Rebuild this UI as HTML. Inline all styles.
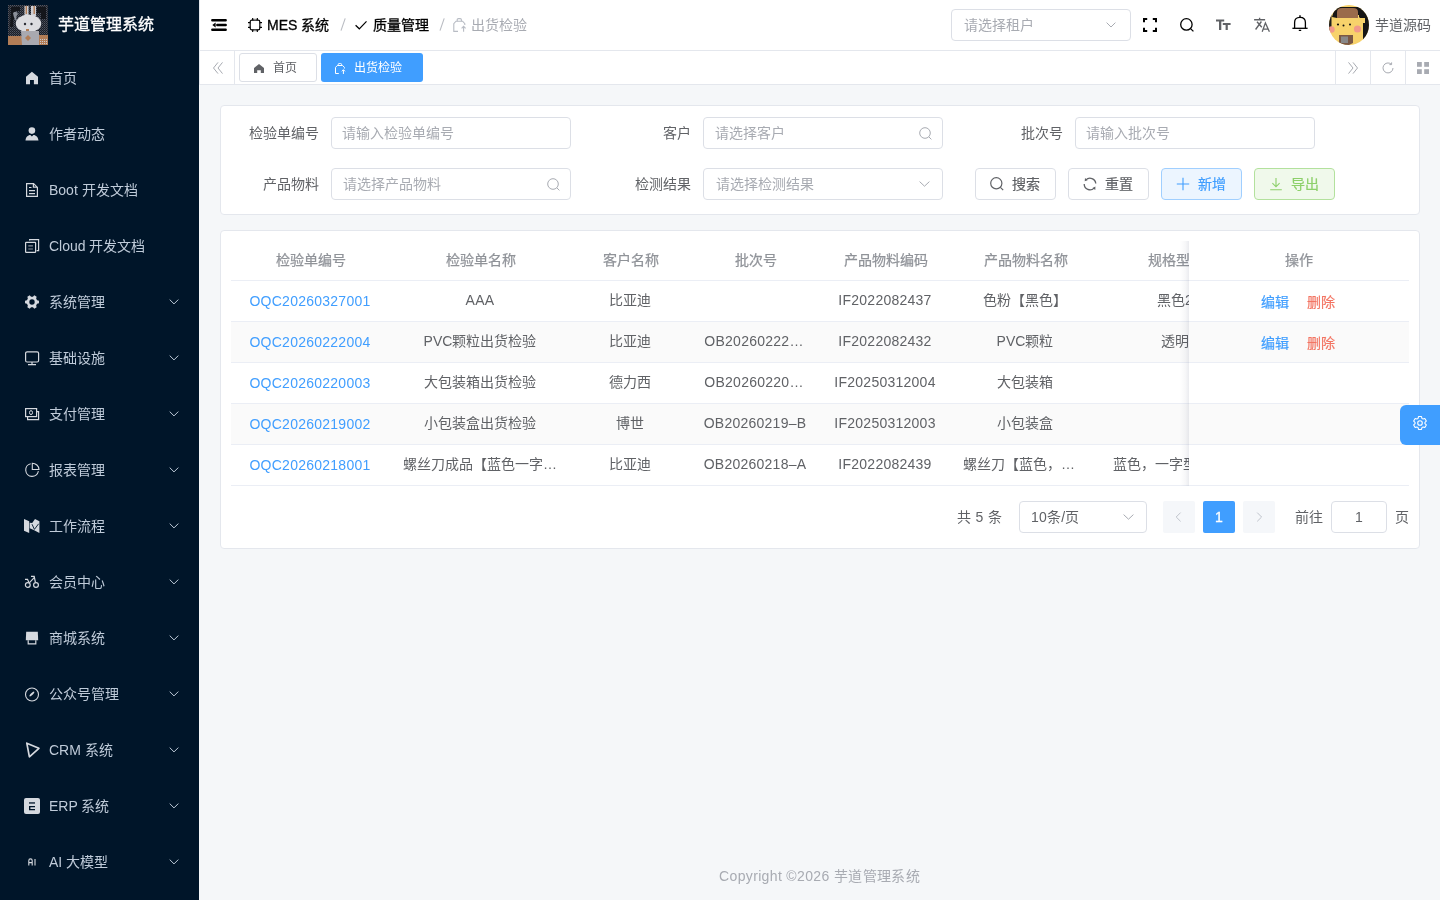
<!DOCTYPE html>
<html lang="zh-CN"><head><meta charset="utf-8">
<style>
*{box-sizing:border-box;margin:0;padding:0}
html,body{width:1440px;height:900px;overflow:hidden;font-family:"Liberation Sans",sans-serif;font-size:14px;color:#606266;background:#f5f7f9}
.abs{position:absolute}
svg{display:block;position:absolute;overflow:visible}
.t{position:absolute;white-space:nowrap;line-height:20px}
/* sidebar */
#side{position:absolute;left:0;top:0;width:199px;height:900px;background:#001529}
.mi{position:absolute;left:0;width:199px;height:56px}
.mi .tx{position:absolute;left:49px;top:18px;line-height:20px;white-space:nowrap;color:#bfcbd9;font-size:14px}
.mi svg.ic{left:25px;top:21px;width:14px;height:14px}
.mi svg.ar{left:169px;top:25px;width:10px;height:6px}
/* header */
#hdr{position:absolute;left:199px;top:0;width:1241px;height:50px;background:#fff;border-left:1px solid #e4e7ed}
#tags{position:absolute;left:199px;top:50px;width:1241px;height:35px;background:#fff;border-top:1px solid #e4e7ed;border-bottom:1px solid #e4e7ed;border-left:1px solid #e4e7ed}
.vsep{position:absolute;top:0;width:1px;height:34px;background:#e4e7ed}
.card{position:absolute;background:#fff;border:1px solid #e4e7ed;border-radius:4px}
.lbl{position:absolute;color:#606266;font-size:14px;line-height:20px;white-space:nowrap;text-align:right}
.inp{position:absolute;height:32px;border:1px solid #dcdfe6;border-radius:4px;background:#fff}
.inp .ph{position:absolute;left:10px;top:5px;line-height:20px;color:#a8abb2;white-space:nowrap}
.btn{position:absolute;height:32px;width:81px;border:1px solid #dcdfe6;border-radius:4px;background:#fff;color:#606266}
.btn .bt{position:absolute;left:36px;top:5px;line-height:20px;-webkit-text-stroke:0.2px currentColor;white-space:nowrap}
.btn svg{left:14px;top:8px;width:14px;height:14px}
.rowline{position:absolute;left:231px;width:1178px;height:1px;background:#ebeef5}
.th{position:absolute;top:250px;line-height:20px;color:#909399;-webkit-text-stroke:0.25px #909399;white-space:nowrap;transform:translateX(-50%)}
.td{position:absolute;line-height:20px;color:#606266;white-space:nowrap;transform:translateX(-50%)}
.lat{letter-spacing:0.25px}
</style></head><body><div id="root" style="position:absolute;left:0;top:0;width:1440px;height:900px;will-change:transform">
<!-- ============ SIDEBAR ============ -->
<div id="side">
  <svg style="left:8px;top:5px;width:40px;height:40px" viewBox="0 0 40 40">
    <defs><pattern id="dith" width="2" height="2" patternUnits="userSpaceOnUse"><rect width="2" height="2" fill="#1c1f26"/><rect width="1" height="1" fill="#505664"/><rect x="1" y="1" width="1" height="1" fill="#3a3f4b"/></pattern>
    <pattern id="dith2" width="2" height="2" patternUnits="userSpaceOnUse"><rect width="2" height="2" fill="#b27d56"/><rect width="1" height="1" fill="#c9c9cf"/></pattern></defs>
    <rect x="0" y="0" width="40" height="40" fill="url(#dith)"/>
    <path d="M3 2H12V6H8V14H5V22H2Z" fill="#14161b"/>
    <path d="M29 2H38V14H33V8H29Z" fill="#14161b"/>
    <path d="M5 8Q8 5 10 9Q7 12 9 16Q6 15 5 8Z" fill="#8a8f99"/>
    <rect x="0" y="31" width="14" height="9" fill="#b27d56"/>
    <rect x="28" y="30" width="12" height="10" fill="#b27d56"/>
    <rect x="30" y="34" width="10" height="5" fill="url(#dith2)"/>
    <rect x="16.5" y="1" width="4" height="10" fill="#cfcfd4"/>
    <rect x="23" y="1" width="5" height="10" fill="#cfcfd4"/>
    <rect x="17.6" y="1" width="1.4" height="8" fill="#b27d56"/>
    <rect x="25.5" y="1" width="1.4" height="8" fill="#b27d56"/>
    <ellipse cx="20.5" cy="18.5" rx="12.7" ry="9" fill="#dcdce0"/>
    <path d="M13 26H31V40H14Z" fill="#a9a9b0"/>
    <path d="M17 33L20 30L23 33L20 36Z" fill="#b27d56"/>
    <circle cx="17" cy="19" r="1.2" fill="#2a2d35"/>
    <circle cx="23.5" cy="19" r="1.2" fill="#2a2d35"/>
    <rect x="18" y="24" width="3" height="2" fill="#b27d56"/>
  </svg>
  <div class="t" style="left:58px;top:14px;font-size:16px;line-height:22px;color:#fff;-webkit-text-stroke:0.35px #fff">芋道管理系统</div>

  <div class="mi" style="top:50px">
    <svg class="ic" viewBox="0 0 14 14"><path d="M6.9 0.8L13 5.7V13.2H8.9V9.1H5V13.2H1V5.7Z" fill="#d5d9df"/></svg>
    <div class="tx">首页</div>
  </div>
  <div class="mi" style="top:106px">
    <svg class="ic" viewBox="0 0 14 14"><circle cx="6.9" cy="3.6" r="3.3" fill="#d5d9df"/><path d="M0.5 13.6C0.7 10.2 2.8 8 5.4 8L6.9 9.6L8.4 8C11 8 13.2 10.2 13.5 13.6Z" fill="#d5d9df"/></svg>
    <div class="tx">作者动态</div>
  </div>
  <div class="mi" style="top:162px">
    <svg class="ic" viewBox="0 0 14 14" fill="none" stroke="#d5d9df" stroke-width="1.2"><path d="M1.6 0.6H8.6L12.4 4.4V13.4H1.6Z"/><path d="M8.4 0.8V4.2H12.2"/><path d="M4 4.5H6.5M4 7.7H10M4 10.6H10"/></svg>
    <div class="tx">Boot 开发文档</div>
  </div>
  <div class="mi" style="top:218px">
    <svg class="ic" viewBox="0 0 14 14" fill="none" stroke="#d5d9df" stroke-width="1.2"><rect x="0.6" y="3.4" width="10" height="10" rx="0.6"/><path d="M4.6 1.4V0.6H13.6V11.6H11.6"/><path d="M3.3 6.9H7.9M3.3 10H7.9" stroke="#8a9099" stroke-width="1.1"/></svg>
    <div class="tx">Cloud 开发文档</div>
  </div>
  <div class="mi" style="top:274px">
    <svg class="ic" viewBox="0 0 14 14"><path id="gear" fill="#d5d9df" fill-rule="evenodd" d="M12.07 5.15 L13.97 5.65 L13.97 8.35 L12.07 8.85 L11.14 10.47 L11.65 12.36 L9.32 13.71 L7.93 12.32 L6.07 12.32 L4.68 13.71 L2.35 12.36 L2.86 10.47 L1.93 8.85 L0.03 8.35 L0.03 5.65 L1.93 5.15 L2.86 3.53 L2.35 1.64 L4.68 0.29 L6.07 1.68 L7.93 1.68 L9.32 0.29 L11.65 1.64 L11.14 3.53Z M7 4.3A2.7 2.7 0 1 0 7 9.7A2.7 2.7 0 1 0 7 4.3Z"/></svg>
    <div class="tx">系统管理</div><svg class="ar" viewBox="0 0 10 6"><path d="M0.7 0.6L5 4.9L9.3 0.6" fill="none" stroke="#bfcbd9" stroke-width="1"/></svg>
  </div>
  <div class="mi" style="top:330px">
    <svg class="ic" viewBox="0 0 14 14" fill="none" stroke="#d5d9df" stroke-width="1.2"><rect x="0.6" y="0.8" width="13" height="10.2" rx="1.5"/><path d="M7 11V13.4M3 13.6H11"/></svg>
    <div class="tx">基础设施</div><svg class="ar" viewBox="0 0 10 6"><path d="M0.7 0.6L5 4.9L9.3 0.6" fill="none" stroke="#bfcbd9" stroke-width="1"/></svg>
  </div>
  <div class="mi" style="top:386px">
    <svg class="ic" viewBox="0 0 14 14" fill="none" stroke="#d5d9df" stroke-width="1.2"><rect x="0.6" y="1.6" width="11" height="8"/><path d="M2.6 9.8V12.6H13.6V4.6H11.8"/><ellipse cx="6" cy="5.6" rx="1.5" ry="2" stroke-width="1"/></svg>
    <div class="tx">支付管理</div><svg class="ar" viewBox="0 0 10 6"><path d="M0.7 0.6L5 4.9L9.3 0.6" fill="none" stroke="#bfcbd9" stroke-width="1"/></svg>
  </div>
  <div class="mi" style="top:442px">
    <svg class="ic" viewBox="0 0 14 14" fill="none" stroke="#d5d9df" stroke-width="1.1"><path d="M5.7 0.7A6.4 6.4 0 1 0 13.4 8.2"/><path d="M7.3 0.2V6.5H14A6.7 6.7 0 0 0 7.3 0.2Z"/></svg>
    <div class="tx">报表管理</div><svg class="ar" viewBox="0 0 10 6"><path d="M0.7 0.6L5 4.9L9.3 0.6" fill="none" stroke="#bfcbd9" stroke-width="1"/></svg>
  </div>
  <div class="mi" style="top:498px">
    <svg class="ic" viewBox="0 0 14 14" fill="#d5d9df"><path d="M-1 0L4.2 2.3V13.9L-1 11.8Z"/><path d="M4.7 3.7L7.2 4L10 0L14.4 2.2V13.9L9.2 11.2L4.7 9.2Z"/><path d="M7 5.2L9.4 10.4L13.6 4.8" fill="none" stroke="#001529" stroke-width="0.9"/></svg>
    <div class="tx">工作流程</div><svg class="ar" viewBox="0 0 10 6"><path d="M0.7 0.6L5 4.9L9.3 0.6" fill="none" stroke="#bfcbd9" stroke-width="1"/></svg>
  </div>
  <div class="mi" style="top:554px">
    <svg class="ic" viewBox="0 0 14 14" fill="none" stroke="#d5d9df" stroke-width="1.2"><circle cx="2.8" cy="10" r="2.4"/><circle cx="11" cy="10" r="2.4"/><path d="M0 4.3H2.5L3.8 7.3"/><path d="M4.3 7.9L9.2 2.6"/><path d="M6 1.4H9.2L10.4 7.4"/></svg>
    <div class="tx">会员中心</div><svg class="ar" viewBox="0 0 10 6"><path d="M0.7 0.6L5 4.9L9.3 0.6" fill="none" stroke="#bfcbd9" stroke-width="1"/></svg>
  </div>
  <div class="mi" style="top:610px">
    <svg class="ic" viewBox="0 0 14 14"><path d="M1.2 0.8H12.8L13.2 9.2H0.8Z" fill="#d5d9df"/><path d="M3.2 9.3V12.8H10.8V9.3" fill="none" stroke="#d5d9df" stroke-width="1.2"/></svg>
    <div class="tx">商城系统</div><svg class="ar" viewBox="0 0 10 6"><path d="M0.7 0.6L5 4.9L9.3 0.6" fill="none" stroke="#bfcbd9" stroke-width="1"/></svg>
  </div>
  <div class="mi" style="top:666px">
    <svg class="ic" viewBox="0 0 14 14"><circle cx="7" cy="7.5" r="6.5" fill="none" stroke="#d5d9df" stroke-width="1.1"/><ellipse cx="6.9" cy="7" rx="3.3" ry="0.95" fill="#d5d9df" transform="rotate(-45 6.9 7)"/></svg>
    <div class="tx">公众号管理</div><svg class="ar" viewBox="0 0 10 6"><path d="M0.7 0.6L5 4.9L9.3 0.6" fill="none" stroke="#bfcbd9" stroke-width="1"/></svg>
  </div>
  <div class="mi" style="top:722px">
    <svg class="ic" viewBox="0 0 14 14"><path d="M1.8 0.2L13.9 5.3L4.4 13.8Z" fill="none" stroke="#d5d9df" stroke-width="1.7" stroke-linejoin="round"/></svg>
    <div class="tx">CRM 系统</div><svg class="ar" viewBox="0 0 10 6"><path d="M0.7 0.6L5 4.9L9.3 0.6" fill="none" stroke="#bfcbd9" stroke-width="1"/></svg>
  </div>
  <div class="mi" style="top:778px">
    <svg class="ic" viewBox="0 0 14 14"><rect x="-1" y="-1" width="16" height="16" rx="2" fill="#d5d9df"/><rect x="4" y="3.3" width="6" height="1.3" fill="#001529"/><path d="M4 6.9H10V8.2H5.4V9.9H10V11.2H4Z" fill="#001529"/></svg>
    <div class="tx">ERP 系统</div><svg class="ar" viewBox="0 0 10 6"><path d="M0.7 0.6L5 4.9L9.3 0.6" fill="none" stroke="#bfcbd9" stroke-width="1"/></svg>
  </div>
  <div class="mi" style="top:834px">
    <svg class="ic" viewBox="0 0 14 14" fill="none" stroke="#d5d9df" stroke-width="1.1"><path d="M3.8 10.5V5.8Q3.8 3.9 5.5 3.9Q7.2 3.9 7.2 5.8V10.5M3.8 7.6H7.2M10 3.9V10.5"/></svg>
    <div class="tx">AI 大模型</div><svg class="ar" viewBox="0 0 10 6"><path d="M0.7 0.6L5 4.9L9.3 0.6" fill="none" stroke="#bfcbd9" stroke-width="1"/></svg>
  </div>
</div>

<!-- ============ HEADER ============ -->
<div id="hdr"></div>
<!-- hamburger -->
<svg style="left:212px;top:19px;width:14px;height:12px" viewBox="0 0 14 12"><path d="M0.3 1.2H13.7M5.3 6H13.7M0.3 10.8H13.7" stroke="#000" stroke-width="2.4" stroke-linecap="round"/><path d="M0.3 6L3.6 3.6V8.4Z" fill="#000"/></svg>
<!-- chip -->
<svg style="left:248px;top:18px;width:14px;height:14px" viewBox="0 0 14 14" fill="none" stroke="#000" stroke-width="1.2"><rect x="2.2" y="2.2" width="9.6" height="9.6" rx="1.6"/><path d="M4.7 0V2.2M9.3 0V2.2M4.7 11.8V14M9.3 11.8V14M0 4.7H2.2M0 9.3H2.2M11.8 4.7H14M11.8 9.3H14"/><path d="M7 0.6V2.2M7 11.8V13.4M0.6 7H2.2M11.8 7H13.4" stroke="#999"/></svg>
<div class="t" style="left:267px;top:15px;color:#000;-webkit-text-stroke:0.3px #000">MES 系统</div>
<svg style="left:340px;top:18px;width:6px;height:13px" viewBox="0 0 6 13"><path d="M5.2 0.4L1 12.6" stroke="#b9bcc2" stroke-width="1.1"/></svg>
<svg style="left:355px;top:19px;width:12px;height:12px" viewBox="0 0 12 12"><path d="M0.6 6.2L4.3 9.8L11.5 2.4" fill="none" stroke="#000" stroke-width="1.2"/></svg>
<div class="t" style="left:373px;top:15px;color:#000;-webkit-text-stroke:0.3px #000">质量管理</div>
<svg style="left:439px;top:18px;width:6px;height:13px" viewBox="0 0 6 13"><path d="M5.2 0.4L1 12.6" stroke="#b9bcc2" stroke-width="1.1"/></svg>
<svg style="left:453px;top:18px;width:14px;height:14px" viewBox="0 0 14 14" fill="none" stroke="#b8bcc4" stroke-width="1.1"><path d="M5 13.4H0.8V5.6L3 3.2H9.6L11.8 5.6V7"/><path d="M4.2 3.3V1.8Q4.2 0.6 5.4 0.6H7.2Q8.4 0.6 8.4 1.8V3.3"/><path d="M10.6 13.8V8.6M8.6 10.4L10.6 8.4L12.6 10.4"/></svg>
<div class="t" style="left:471px;top:15px;color:#a8abb2">出货检验</div>
<!-- tenant select -->
<div class="inp" style="left:951px;top:9px;width:180px;height:32px"><div class="ph" style="left:12px">请选择租户</div>
<svg style="left:154px;top:12px;width:10px;height:6px" viewBox="0 0 10 6"><path d="M0.6 0.6L5 5L9.4 0.6" fill="none" stroke="#a8abb2" stroke-width="1"/></svg></div>
<!-- fullscreen -->
<svg style="left:1143px;top:18px;width:14px;height:14px" viewBox="0 0 14 14" fill="none" stroke="#000" stroke-width="2"><path d="M1 4.2V1H4.2M9.8 1H13V4.2M13 9.8V13H9.8M4.2 13H1V9.8"/></svg>
<!-- search -->
<svg style="left:1180px;top:18px;width:14px;height:14px" viewBox="0 0 14 14" fill="none" stroke="#000" stroke-width="1.3"><circle cx="6.4" cy="6.4" r="5.7"/><path d="M10.6 10.6L13.4 13.4"/></svg>
<!-- font size -->
<svg style="left:1216px;top:19px;width:15px;height:12px" viewBox="0 0 15 12" fill="#606266"><path d="M0 0.4H8.2V2.6H5.3V11H3V2.6H0Z"/><path d="M6.8 4H14.6V5.9H11.8V11H9.6V5.9H6.8Z"/></svg>
<!-- translate -->
<svg style="left:1254px;top:18px;width:16px;height:14px" viewBox="0 0 16 14" fill="none" stroke="#606266" stroke-width="1.35"><path d="M0.1 1.7H11.1M5.6 -0.2V1.5M3 3.8L7.8 9.3M7.4 3.5L1.6 11.5"/><path d="M8.2 13.7L11.4 4.9L15.4 13.7M9.5 11.1H14.2" stroke-width="1.3"/></svg>
<!-- bell -->
<svg style="left:1292px;top:15px;width:16px;height:16px" viewBox="0 0 16 16" fill="none" stroke="#000" stroke-width="1.3"><path d="M2.6 13.2V7.6Q2.6 2.3 8 2.3Q13.4 2.3 13.4 7.6V13.2"/><path d="M0.4 13.3H15.6"/><path d="M8 0.3V2.2M6.8 15.4H9.2" stroke-width="1.4"/></svg>
<!-- avatar -->
<svg style="left:1329px;top:5px;width:40px;height:40px" viewBox="0 0 40 40">
  <defs><clipPath id="avc"><circle cx="20" cy="20" r="20"/></clipPath></defs>
  <g clip-path="url(#avc)">
    <rect x="0" y="0" width="40" height="40" fill="#f7d26b"/>
    <path d="M3 12L6 2H36L40 10V36H34V16L30 12V10H8V13Z" fill="#161616"/>
    <path d="M8 13V7Q8 3 13 3H24Q29 3 29 7V13Z" fill="#9a6b4b"/>
    <path d="M31 13H36V18H31Z" fill="#f7d26b"/>
    <rect x="0" y="6" width="2.5" height="20" fill="#1e1e1e"/>
    <circle cx="9" cy="19.5" r="1.1" fill="#111"/><circle cx="14.5" cy="20.5" r="1" fill="#111"/><circle cx="21" cy="19.5" r="1" fill="#111"/>
    <circle cx="2.5" cy="24.5" r="3.2" fill="#f1998a"/>
    <circle cx="28.5" cy="24" r="3.6" fill="#f1998a"/>
    <path d="M10 30H24V38L20 40H13L10 38Z" fill="#7a5844"/>
    <rect x="12" y="31.5" width="7" height="6.5" fill="#888"/>
  </g>
</svg>
<div class="t" style="left:1375px;top:15px;color:#606266">芋道源码</div>

<div id="tags">
  <svg style="left:13px;top:11px;width:10px;height:12px" viewBox="0 0 10 12" fill="none" stroke="#a8abb2" stroke-width="1"><path d="M5 0.4L0.5 6L5 11.6M9.5 0.4L5 6L9.5 11.6"/></svg>
  <div class="vsep" style="left:34px"></div>
  <div class="abs" style="left:39px;top:2px;width:78px;height:29px;border:1px solid #dcdfe6;border-radius:3px;background:#fff"></div>
  <svg style="left:54px;top:13px;width:10px;height:9px" viewBox="0 0 10 9"><path d="M5 0L10 4V9H6.8V6.2H3.2V9H0V4Z" fill="#606266"/></svg>
  <div class="t" style="left:73px;top:7px;font-size:12px;color:#606266">首页</div>
  <div class="abs" style="left:121px;top:2px;width:102px;height:29px;border-radius:3px;background:#409eff"></div>
  <svg style="left:335px;top:12px;width:11px;height:11px;left:135px" viewBox="0 0 11 11" fill="none" stroke="#fff" stroke-width="1"><path d="M3.8 10.5H0.5V4.4L2.3 2.5H7.6L9.4 4.4V5.5"/><path d="M3.2 2.6V1.5Q3.2 0.5 4.2 0.5H5.6Q6.6 0.5 6.6 1.5V2.6"/><path d="M8.4 11V6.8M6.8 8.3L8.4 6.7L10 8.3"/></svg>
  <div class="t" style="left:154px;top:7px;font-size:12px;color:#fff">出货检验</div>
  <div class="vsep" style="left:1135px"></div>
  <svg style="left:1148px;top:11px;width:10px;height:12px" viewBox="0 0 10 12" fill="none" stroke="#a8abb2" stroke-width="1"><path d="M0.5 0.4L5 6L0.5 11.6M5 0.4L9.5 6L5 11.6"/></svg>
  <div class="vsep" style="left:1170px"></div>
  <svg style="left:1182px;top:11px;width:12px;height:12px" viewBox="0 0 12 12" fill="none" stroke="#a8abb2" stroke-width="1"><path d="M11 6A5 5 0 1 1 9.2 2.1"/><path d="M9.6 0.4V2.6H7.4" /></svg>
  <div class="vsep" style="left:1205px"></div>
  <svg style="left:1217px;top:11px;width:12px;height:12px" viewBox="0 0 12 12" fill="#a8abb2"><rect x="0" y="0" width="4.8" height="4.8"/><rect x="7.2" y="0" width="4.8" height="4.8"/><rect x="0" y="7.2" width="4.8" height="4.8"/><rect x="7.2" y="7.2" width="4.8" height="4.8"/></svg>
</div>
<div class="card" style="left:220px;top:105px;width:1200px;height:110px"></div>
<!-- form row 1 -->
<div class="lbl" style="left:219px;top:123px;width:100px">检验单编号</div>
<div class="inp" style="left:331px;top:117px;width:240px"><div class="ph">请输入检验单编号</div></div>
<div class="lbl" style="left:591px;top:123px;width:100px">客户</div>
<div class="inp" style="left:703px;top:117px;width:240px"><div class="ph" style="left:11px">请选择客户</div>
<svg style="left:215px;top:9px;width:13px;height:13px" viewBox="0 0 13 13" fill="none" stroke="#a8abb2" stroke-width="1"><circle cx="6" cy="6" r="5.3"/><path d="M9.8 9.8L12.4 12.4"/></svg></div>
<div class="lbl" style="left:963px;top:123px;width:100px">批次号</div>
<div class="inp" style="left:1075px;top:117px;width:240px"><div class="ph">请输入批次号</div></div>
<!-- form row 2 -->
<div class="lbl" style="left:219px;top:174px;width:100px">产品物料</div>
<div class="inp" style="left:331px;top:168px;width:240px"><div class="ph" style="left:11px">请选择产品物料</div>
<svg style="left:215px;top:9px;width:13px;height:13px" viewBox="0 0 13 13" fill="none" stroke="#a8abb2" stroke-width="1"><circle cx="6" cy="6" r="5.3"/><path d="M9.8 9.8L12.4 12.4"/></svg></div>
<div class="lbl" style="left:591px;top:174px;width:100px">检测结果</div>
<div class="inp" style="left:703px;top:168px;width:240px"><div class="ph" style="left:12px">请选择检测结果</div>
<svg style="left:215px;top:12px;width:11px;height:6px" viewBox="0 0 11 6"><path d="M0.6 0.6L5.5 5.2L10.4 0.6" fill="none" stroke="#a8abb2" stroke-width="1"/></svg></div>
<!-- buttons -->
<div class="btn" style="left:975px;top:168px">
<svg viewBox="0 0 14 14" fill="none" stroke="#606266" stroke-width="1.2"><circle cx="6.3" cy="6.3" r="5.6"/><path d="M10.4 10.4L13.2 13.2"/></svg><div class="bt">搜索</div></div>
<div class="btn" style="left:1068px;top:168px">
<svg viewBox="0 0 12 12" style="left:15px;top:9px;width:12px;height:12px"><path d="M1.9 1.9A5.8 5.8 0 0 1 11.78 5.49M10.1 10.1A5.8 5.8 0 0 1 0.2 6" fill="none" stroke="#606266" stroke-width="1.3"/><path d="M1 0L3.6 2.3L0.7 3.3Z M11.3 12L8.5 9.9L11.4 8.6Z" fill="#606266"/></svg><div class="bt">重置</div></div>
<div class="btn" style="left:1161px;top:168px;background:#ecf5ff;border-color:#a0cfff;color:#409eff">
<svg viewBox="0 0 14 14" fill="none" stroke="#409eff" stroke-width="1.1"><path d="M7 0.8V13.2M0.8 7H13.2"/></svg><div class="bt">新增</div></div>
<div class="btn" style="left:1254px;top:168px;background:#f0f9eb;border-color:#b3e19d;color:#8dd06a">
<svg viewBox="0 0 14 14" fill="none" stroke="#8dd06a" stroke-width="1.1"><path d="M7 1V9.6M3.4 6.2L7 9.8L10.6 6.2M1.2 12.8H12.8"/></svg><div class="bt">导出</div></div>

<div class="card" style="left:220px;top:230px;width:1200px;height:319px"></div>
<!-- table -->
<div class="abs" style="left:231px;top:322px;width:1178px;height:40px;background:#fafafa"></div>
<div class="abs" style="left:231px;top:404px;width:1178px;height:40px;background:#fafafa"></div>
<div class="rowline" style="top:280px"></div>
<div class="rowline" style="top:321px"></div>
<div class="rowline" style="top:362px"></div>
<div class="rowline" style="top:403px"></div>
<div class="rowline" style="top:444px"></div>
<div class="rowline" style="top:485px"></div>
<!-- header -->
<div class="th" style="left:311px">检验单编号</div>
<div class="th" style="left:480.5px">检验单名称</div>
<div class="th" style="left:630.5px">客户名称</div>
<div class="th" style="left:755.5px">批次号</div>
<div class="th" style="left:885.5px">产品物料编码</div>
<div class="th" style="left:1025.5px">产品物料名称</div>
<div class="th" style="left:1176px">规格型号</div>
<!-- rows -->
<div class="td lat" style="left:310px;top:291px;color:#409eff">OQC20260327001</div>
<div class="td lat" style="left:480px;top:290px">AAA</div>
<div class="td" style="left:629.5px;top:290px">比亚迪</div>
<div class="td lat" style="left:885px;top:290px">IF2022082437</div>
<div class="td" style="left:1025px;top:290px">色粉【黑色】</div>
<div class="t" style="left:1157px;top:290px">黑色2023</div>

<div class="td lat" style="left:310px;top:332px;color:#409eff">OQC20260222004</div>
<div class="td" style="left:480px;top:331px">PVC颗粒出货检验</div>
<div class="td" style="left:629.5px;top:331px">比亚迪</div>
<div class="td lat" style="left:754px;top:331px">OB20260222…</div>
<div class="td lat" style="left:885px;top:331px">IF2022082432</div>
<div class="td" style="left:1025px;top:331px">PVC颗粒</div>
<div class="t" style="left:1161px;top:331px">透明色</div>

<div class="td lat" style="left:310px;top:373px;color:#409eff">OQC20260220003</div>
<div class="td" style="left:480px;top:372px">大包装箱出货检验</div>
<div class="td" style="left:629.5px;top:372px">德力西</div>
<div class="td lat" style="left:754px;top:372px">OB20260220…</div>
<div class="td lat" style="left:885px;top:372px">IF20250312004</div>
<div class="td" style="left:1025px;top:372px">大包装箱</div>

<div class="td lat" style="left:310px;top:414px;color:#409eff">OQC20260219002</div>
<div class="td" style="left:480px;top:413px">小包装盒出货检验</div>
<div class="td" style="left:629.5px;top:413px">博世</div>
<div class="td lat" style="left:755px;top:413px">OB20260219–B</div>
<div class="td lat" style="left:885px;top:413px">IF20250312003</div>
<div class="td" style="left:1025px;top:413px">小包装盒</div>

<div class="td lat" style="left:310px;top:455px;color:#409eff">OQC20260218001</div>
<div class="td" style="left:480px;top:454px">螺丝刀成品【蓝色一字…</div>
<div class="td" style="left:629.5px;top:454px">比亚迪</div>
<div class="td lat" style="left:755px;top:454px">OB20260218–A</div>
<div class="td lat" style="left:885px;top:454px">IF2022082439</div>
<div class="td" style="left:1019px;top:454px">螺丝刀【蓝色，…</div>
<div class="t" style="left:1113px;top:454px">蓝色，一字型螺丝刀</div>
<!-- fixed right column -->
<div class="abs" style="left:1189px;top:241px;width:220px;height:244px;background:#fff"></div>
<div class="abs" style="left:1180px;top:241px;width:9px;height:245px;background:linear-gradient(to right,rgba(30,40,80,0),rgba(30,40,80,0.035) 60%,rgba(30,40,80,0.09))"></div>
<div class="abs" style="left:1189px;top:322px;width:220px;height:40px;background:#fafafa"></div>
<div class="abs" style="left:1189px;top:404px;width:220px;height:40px;background:#fafafa"></div>
<div class="abs" style="left:1189px;top:280px;width:220px;height:1px;background:#ebeef5"></div>
<div class="abs" style="left:1189px;top:321px;width:220px;height:1px;background:#ebeef5"></div>
<div class="abs" style="left:1189px;top:362px;width:220px;height:1px;background:#ebeef5"></div>
<div class="abs" style="left:1189px;top:403px;width:220px;height:1px;background:#ebeef5"></div>
<div class="abs" style="left:1189px;top:444px;width:220px;height:1px;background:#ebeef5"></div>
<div class="abs" style="left:1189px;top:485px;width:220px;height:1px;background:#ebeef5"></div>
<div class="th" style="left:1298.5px">操作</div>
<div class="t" style="left:1261px;top:292px;color:#409eff;-webkit-text-stroke:0.2px #409eff">编辑</div>
<div class="t" style="left:1307px;top:292px;color:#f37563;-webkit-text-stroke:0.2px #f37563">删除</div>
<div class="t" style="left:1261px;top:333px;color:#409eff;-webkit-text-stroke:0.2px #409eff">编辑</div>
<div class="t" style="left:1307px;top:333px;color:#f37563;-webkit-text-stroke:0.2px #f37563">删除</div>
<!-- pagination -->
<div class="t lat" style="left:957px;top:507px">共 5 条</div>
<div class="inp" style="left:1019px;top:501px;width:128px"><div class="ph lat" style="left:11px;color:#606266">10条/页</div>
<svg style="left:103px;top:12px;width:11px;height:6px" viewBox="0 0 11 6"><path d="M0.6 0.6L5.5 5.2L10.4 0.6" fill="none" stroke="#a8abb2" stroke-width="1"/></svg></div>
<div class="abs" style="left:1163px;top:501px;width:32px;height:32px;background:#f5f7fa;border-radius:2px"></div>
<svg style="left:1175px;top:512px;width:7px;height:10px" viewBox="0 0 7 10"><path d="M5.6 0.6L1.2 5L5.6 9.4" fill="none" stroke="#c0c4cc" stroke-width="1"/></svg>
<div class="abs" style="left:1203px;top:501px;width:32px;height:32px;background:#409eff;border-radius:2px"></div>
<div class="t" style="left:1203px;top:507px;width:32px;text-align:center;color:#fff;-webkit-text-stroke:0.3px #fff">1</div>
<div class="abs" style="left:1243px;top:501px;width:32px;height:32px;background:#f5f7fa;border-radius:2px"></div>
<svg style="left:1256px;top:512px;width:7px;height:10px" viewBox="0 0 7 10"><path d="M1.2 0.6L5.6 5L1.2 9.4" fill="none" stroke="#c0c4cc" stroke-width="1"/></svg>
<div class="t" style="left:1295px;top:507px">前往</div>
<div class="inp" style="left:1331px;top:501px;width:56px"><div class="ph" style="left:0;width:54px;text-align:center;color:#606266">1</div></div>
<div class="t" style="left:1395px;top:507px">页</div>
<!-- settings float -->
<div class="abs" style="left:1400px;top:405px;width:40px;height:40px;background:#409eff;border-radius:6px 0 0 6px"></div>
<svg style="left:1413px;top:416px;width:14px;height:14px" viewBox="0 0 14 14" fill="none" stroke="#fff" stroke-width="1.1"><path d="M8.90 11.62 L8.50 13.43 L5.50 13.43 L5.10 11.62 L3.94 10.96 L2.18 11.51 L0.68 8.91 L2.04 7.67 L2.04 6.33 L0.68 5.09 L2.18 2.49 L3.94 3.04 L5.10 2.38 L5.50 0.57 L8.50 0.57 L8.90 2.38 L10.06 3.04 L11.82 2.49 L13.32 5.09 L11.96 6.33 L11.96 7.67 L13.32 8.91 L11.82 11.51 L10.06 10.96Z" stroke-linejoin="round"/><circle cx="7" cy="7" r="2.3"/></svg>
<div class="t" style="left:199px;top:866px;width:1241px;text-align:center;color:#a8abb2;font-size:14px;letter-spacing:0.35px">Copyright ©2026 芋道管理系统</div>
</div></body></html>
